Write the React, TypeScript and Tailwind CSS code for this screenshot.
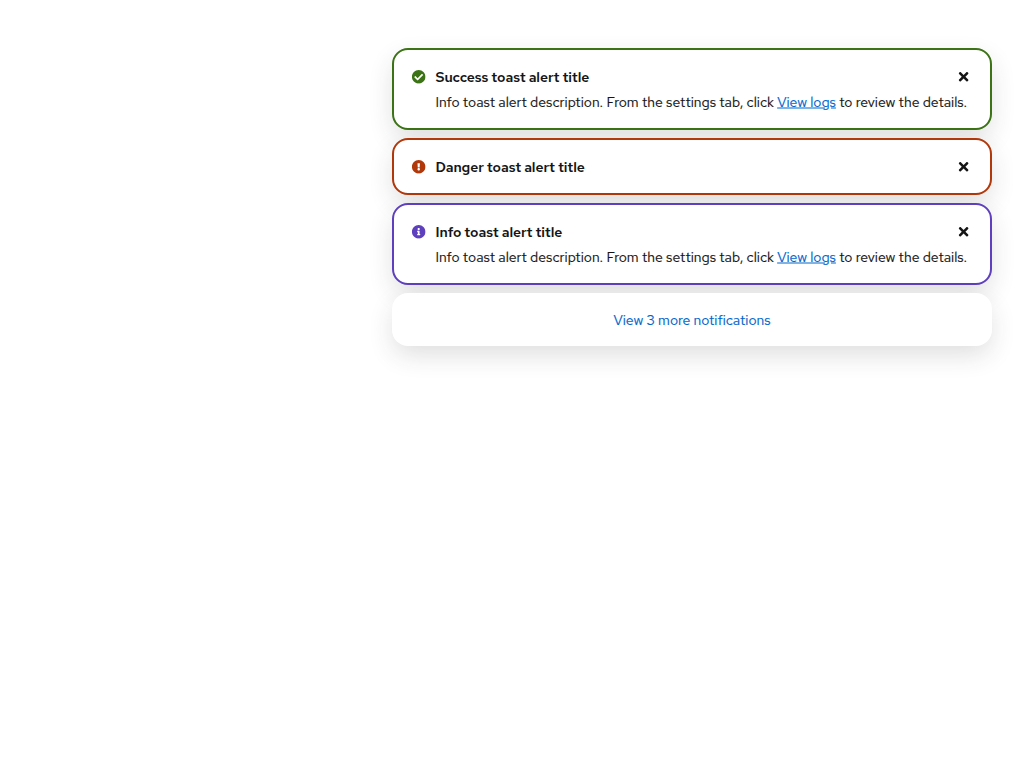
import type { ReactNode } from "react";
import { FaCheckCircle, FaExclamationCircle, FaInfoCircle, FaTimes } from "react-icons/fa";

type ToastProps = {
  border: string;
  icon: ReactNode;
  title: string;
  children?: ReactNode;
};

function Toast({ border, icon, title, children }: ToastProps) {
  return (
    <li
      className={`flex items-start rounded-2xl border-2 bg-white py-4 pr-4 pl-[17.5px] shadow-[0_10px_26px_-2px_rgba(41,41,41,0.16)] ${border}`}
    >
      <span className="flex h-[21px] w-6 shrink-0 items-center">{icon}</span>
      <div className="min-w-0 flex-1">
        <div className="flex h-[21px] justify-between">
          <h4 className="pt-px text-sm leading-[21px] font-semibold tracking-[-0.09px] whitespace-nowrap">{title}</h4>
          <button type="button" aria-label="Close" className="flex h-[21px] w-[21px] items-center justify-center">
            <FaTimes className="size-3.5 -translate-x-[0.4px] -translate-y-[0.3px]" />
          </button>
        </div>
        {children}
      </div>
    </li>
  );
}

function Description() {
  return (
    <p className="mt-[5px] -mb-px text-sm leading-[21px] whitespace-nowrap [-webkit-text-stroke:0.15px]">
      Info toast alert description. From the settings tab, click{" "}
      <a href="#" className="text-[#0066cc] underline decoration-[#0066cc]/50 decoration-2 underline-offset-0">
        View logs
      </a>{" "}
      to review the details.
    </p>
  );
}

export default function App() {
  return (
    <main className="min-h-screen bg-white pt-12 pr-8 font-['Red_Hat_Text',Inter,'Noto_Sans',sans-serif] text-[#151515]">
      <ul className="ml-auto flex w-[600px] flex-col gap-2">
        <Toast
          border="border-[#3d7317]"
          icon={<FaCheckCircle className="size-3.5 -translate-x-[0.3px] -translate-y-[0.3px] text-[#3d7317]" />}
          title="Success toast alert title"
        >
          <Description />
        </Toast>
        <Toast
          border="border-[#b1380b]"
          icon={<FaExclamationCircle className="size-3.5 -translate-x-[0.3px] -translate-y-[0.3px] text-[#b1380b]" />}
          title="Danger toast alert title"
        />
        <Toast
          border="border-[#5e40be]"
          icon={<FaInfoCircle className="size-3.5 -translate-x-[0.3px] -translate-y-[0.3px] text-[#5e40be]" />}
          title="Info toast alert title"
        >
          <Description />
        </Toast>
        <li className="rounded-2xl bg-white shadow-[0_10px_26px_-2px_rgba(41,41,41,0.16)]">
          <button
            type="button"
            className="block w-full pt-[17px] pb-[15px] text-center text-sm leading-[21px] text-[#0066cc] [-webkit-text-stroke:0.15px]"
          >
            View 3 more notifications
          </button>
        </li>
      </ul>
    </main>
  );
}
